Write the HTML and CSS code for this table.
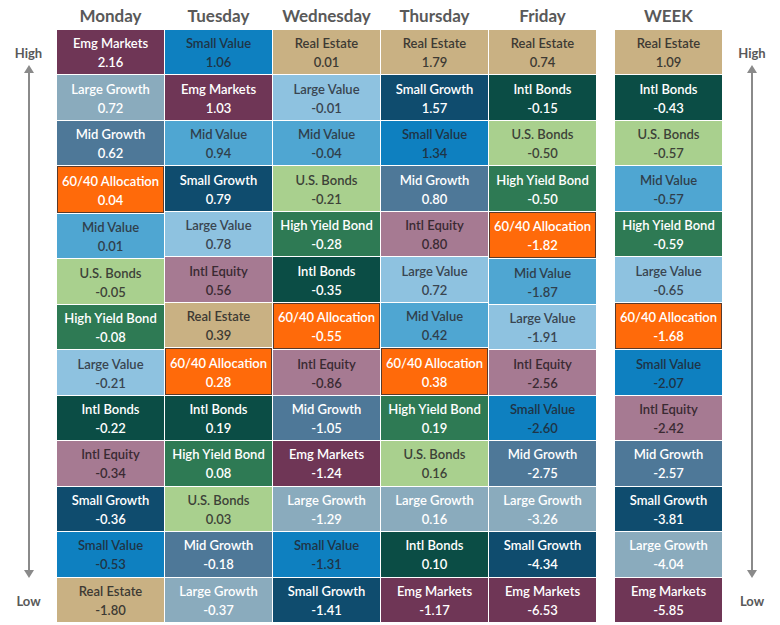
FILE: index.html
```html
<!DOCTYPE html>
<html lang="en">
<head>
<meta charset="utf-8">
<title>Asset class returns</title>
<link rel="stylesheet" href="styles.css">
</head>
<body>
<div class="board">
  <div class="axis">
    <div class="axis-label">High</div>
    <div class="arrow"><span class="head up"></span><span class="shaft"></span><span class="head down"></span></div>
    <div class="axis-label">Low</div>
  </div>

  <div class="days">
    <div class="col">
      <div class="hdr">Monday</div>
      <div class="cell em"><span>Emg Markets</span><span>2.16</span></div>
      <div class="cell lg"><span>Large Growth</span><span>0.72</span></div>
      <div class="cell mg"><span>Mid Growth</span><span>0.62</span></div>
      <div class="cell al"><span>60/40 Allocation</span><span>0.04</span></div>
      <div class="cell mv"><span>Mid Value</span><span>0.01</span></div>
      <div class="cell us"><span>U.S. Bonds</span><span>-0.05</span></div>
      <div class="cell hy"><span>High Yield Bond</span><span>-0.08</span></div>
      <div class="cell lv"><span>Large Value</span><span>-0.21</span></div>
      <div class="cell ib"><span>Intl Bonds</span><span>-0.22</span></div>
      <div class="cell ie"><span>Intl Equity</span><span>-0.34</span></div>
      <div class="cell sg"><span>Small Growth</span><span>-0.36</span></div>
      <div class="cell sv"><span>Small Value</span><span>-0.53</span></div>
      <div class="cell re"><span>Real Estate</span><span>-1.80</span></div>
    </div>
    <div class="col">
      <div class="hdr">Tuesday</div>
      <div class="cell sv"><span>Small Value</span><span>1.06</span></div>
      <div class="cell em"><span>Emg Markets</span><span>1.03</span></div>
      <div class="cell mv"><span>Mid Value</span><span>0.94</span></div>
      <div class="cell sg"><span>Small Growth</span><span>0.79</span></div>
      <div class="cell lv"><span>Large Value</span><span>0.78</span></div>
      <div class="cell ie"><span>Intl Equity</span><span>0.56</span></div>
      <div class="cell re"><span>Real Estate</span><span>0.39</span></div>
      <div class="cell al"><span>60/40 Allocation</span><span>0.28</span></div>
      <div class="cell ib"><span>Intl Bonds</span><span>0.19</span></div>
      <div class="cell hy"><span>High Yield Bond</span><span>0.08</span></div>
      <div class="cell us"><span>U.S. Bonds</span><span>0.03</span></div>
      <div class="cell mg"><span>Mid Growth</span><span>-0.18</span></div>
      <div class="cell lg"><span>Large Growth</span><span>-0.37</span></div>
    </div>
    <div class="col">
      <div class="hdr">Wednesday</div>
      <div class="cell re"><span>Real Estate</span><span>0.01</span></div>
      <div class="cell lv"><span>Large Value</span><span>-0.01</span></div>
      <div class="cell mv"><span>Mid Value</span><span>-0.04</span></div>
      <div class="cell us"><span>U.S. Bonds</span><span>-0.21</span></div>
      <div class="cell hy"><span>High Yield Bond</span><span>-0.28</span></div>
      <div class="cell ib"><span>Intl Bonds</span><span>-0.35</span></div>
      <div class="cell al"><span>60/40 Allocation</span><span>-0.55</span></div>
      <div class="cell ie"><span>Intl Equity</span><span>-0.86</span></div>
      <div class="cell mg"><span>Mid Growth</span><span>-1.05</span></div>
      <div class="cell em"><span>Emg Markets</span><span>-1.24</span></div>
      <div class="cell lg"><span>Large Growth</span><span>-1.29</span></div>
      <div class="cell sv"><span>Small Value</span><span>-1.31</span></div>
      <div class="cell sg"><span>Small Growth</span><span>-1.41</span></div>
    </div>
    <div class="col">
      <div class="hdr">Thursday</div>
      <div class="cell re"><span>Real Estate</span><span>1.79</span></div>
      <div class="cell sg"><span>Small Growth</span><span>1.57</span></div>
      <div class="cell sv"><span>Small Value</span><span>1.34</span></div>
      <div class="cell mg"><span>Mid Growth</span><span>0.80</span></div>
      <div class="cell ie"><span>Intl Equity</span><span>0.80</span></div>
      <div class="cell lv"><span>Large Value</span><span>0.72</span></div>
      <div class="cell mv"><span>Mid Value</span><span>0.42</span></div>
      <div class="cell al"><span>60/40 Allocation</span><span>0.38</span></div>
      <div class="cell hy"><span>High Yield Bond</span><span>0.19</span></div>
      <div class="cell us"><span>U.S. Bonds</span><span>0.16</span></div>
      <div class="cell lg"><span>Large Growth</span><span>0.16</span></div>
      <div class="cell ib"><span>Intl Bonds</span><span>0.10</span></div>
      <div class="cell em"><span>Emg Markets</span><span>-1.17</span></div>
    </div>
    <div class="col">
      <div class="hdr">Friday</div>
      <div class="cell re"><span>Real Estate</span><span>0.74</span></div>
      <div class="cell ib"><span>Intl Bonds</span><span>-0.15</span></div>
      <div class="cell us"><span>U.S. Bonds</span><span>-0.50</span></div>
      <div class="cell hy"><span>High Yield Bond</span><span>-0.50</span></div>
      <div class="cell al"><span>60/40 Allocation</span><span>-1.82</span></div>
      <div class="cell mv"><span>Mid Value</span><span>-1.87</span></div>
      <div class="cell lv"><span>Large Value</span><span>-1.91</span></div>
      <div class="cell ie"><span>Intl Equity</span><span>-2.56</span></div>
      <div class="cell sv"><span>Small Value</span><span>-2.60</span></div>
      <div class="cell mg"><span>Mid Growth</span><span>-2.75</span></div>
      <div class="cell lg"><span>Large Growth</span><span>-3.26</span></div>
      <div class="cell sg"><span>Small Growth</span><span>-4.34</span></div>
      <div class="cell em"><span>Emg Markets</span><span>-6.53</span></div>
    </div>
  </div>

  <div class="week">
    <div class="col">
      <div class="hdr">WEEK</div>
      <div class="cell re"><span>Real Estate</span><span>1.09</span></div>
      <div class="cell ib"><span>Intl Bonds</span><span>-0.43</span></div>
      <div class="cell us"><span>U.S. Bonds</span><span>-0.57</span></div>
      <div class="cell mv"><span>Mid Value</span><span>-0.57</span></div>
      <div class="cell hy"><span>High Yield Bond</span><span>-0.59</span></div>
      <div class="cell lv"><span>Large Value</span><span>-0.65</span></div>
      <div class="cell al"><span>60/40 Allocation</span><span>-1.68</span></div>
      <div class="cell sv"><span>Small Value</span><span>-2.07</span></div>
      <div class="cell ie"><span>Intl Equity</span><span>-2.42</span></div>
      <div class="cell mg"><span>Mid Growth</span><span>-2.57</span></div>
      <div class="cell sg"><span>Small Growth</span><span>-3.81</span></div>
      <div class="cell lg"><span>Large Growth</span><span>-4.04</span></div>
      <div class="cell em"><span>Emg Markets</span><span>-5.85</span></div>
    </div>
  </div>

  <div class="axis right">
    <div class="axis-label">High</div>
    <div class="arrow"><span class="head up"></span><span class="shaft"></span><span class="head down"></span></div>
    <div class="axis-label">Low</div>
  </div>
</div>
</body>
</html>
```

FILE: styles.css
```css
* { box-sizing: border-box; }
html, body { margin: 0; padding: 0; background: #ffffff; }
body {
  width: 780px;
  height: 625px;
  overflow: hidden;
  font-family: Lato, "Open Sans", sans-serif;
}
.board {
  display: flex;
  height: 622px;
}
.axis {
  width: 57px;
  display: flex;
  flex-direction: column;
  align-items: center;
  padding: 43px 0 11px 0;
}
.axis.right {
  width: 58px;
  padding-left: 2px;
}
.axis-label {
  height: 20px;
  line-height: 20px;
  font-size: 13px;
  font-weight: 700;
  color: #595959;
}
.arrow {
  flex: 1;
  display: flex;
  flex-direction: column;
  align-items: center;
  margin: 2px 0 13px 0;
}
.shaft {
  flex: 1;
  width: 2px;
  background: #8a8a8a;
}
.head {
  width: 0;
  height: 0;
  border-left: 5px solid transparent;
  border-right: 5px solid transparent;
}
.head.up { border-bottom: 8px solid #8a8a8a; }
.head.down { border-top: 8px solid #8a8a8a; }

.days {
  display: flex;
  gap: 1px;
}
.week {
  margin-left: 19px;
  display: flex;
}
.col {
  width: 107px;
  display: flex;
  flex-direction: column;
  gap: 1px;
}
.hdr {
  height: 29px;
  display: flex;
  align-items: center;
  justify-content: center;
  font-size: 17px;
  font-weight: 700;
  color: #595959;
  padding-top: 1px;
}
.cell {
  flex: 1;
  display: flex;
  flex-direction: column;
  align-items: center;
  justify-content: center;
  padding-top: 2px;
  font-size: 13px;
  font-weight: 600;
  line-height: 19px;
  color: #3d3d3d;
  white-space: nowrap;
}
.em { background: #6f3656; color: #ffffff; }
.lg { background: #8aabbd; color: #ffffff; }
.mg { background: #4e7898; color: #ffffff; }
.al { background: #ff6a0a; color: #ffffff; border: 1px solid #5a3a2a; }
.mv { background: #4fa6d2; color: #2f3f4c; }
.us { background: #a9d08e; color: #3d4238; }
.hy { background: #2e7a54; color: #ffffff; }
.lv { background: #8ec2e0; color: #394550; }
.ib { background: #0b4d45; color: #ffffff; }
.ie { background: #a67a92; color: #3a2a32; }
.sg { background: #0f4c6e; color: #ffffff; }
.sv { background: #0e80c0; color: #1f3446; }
.re { background: #c9b183; color: #3d3a33; }
```
